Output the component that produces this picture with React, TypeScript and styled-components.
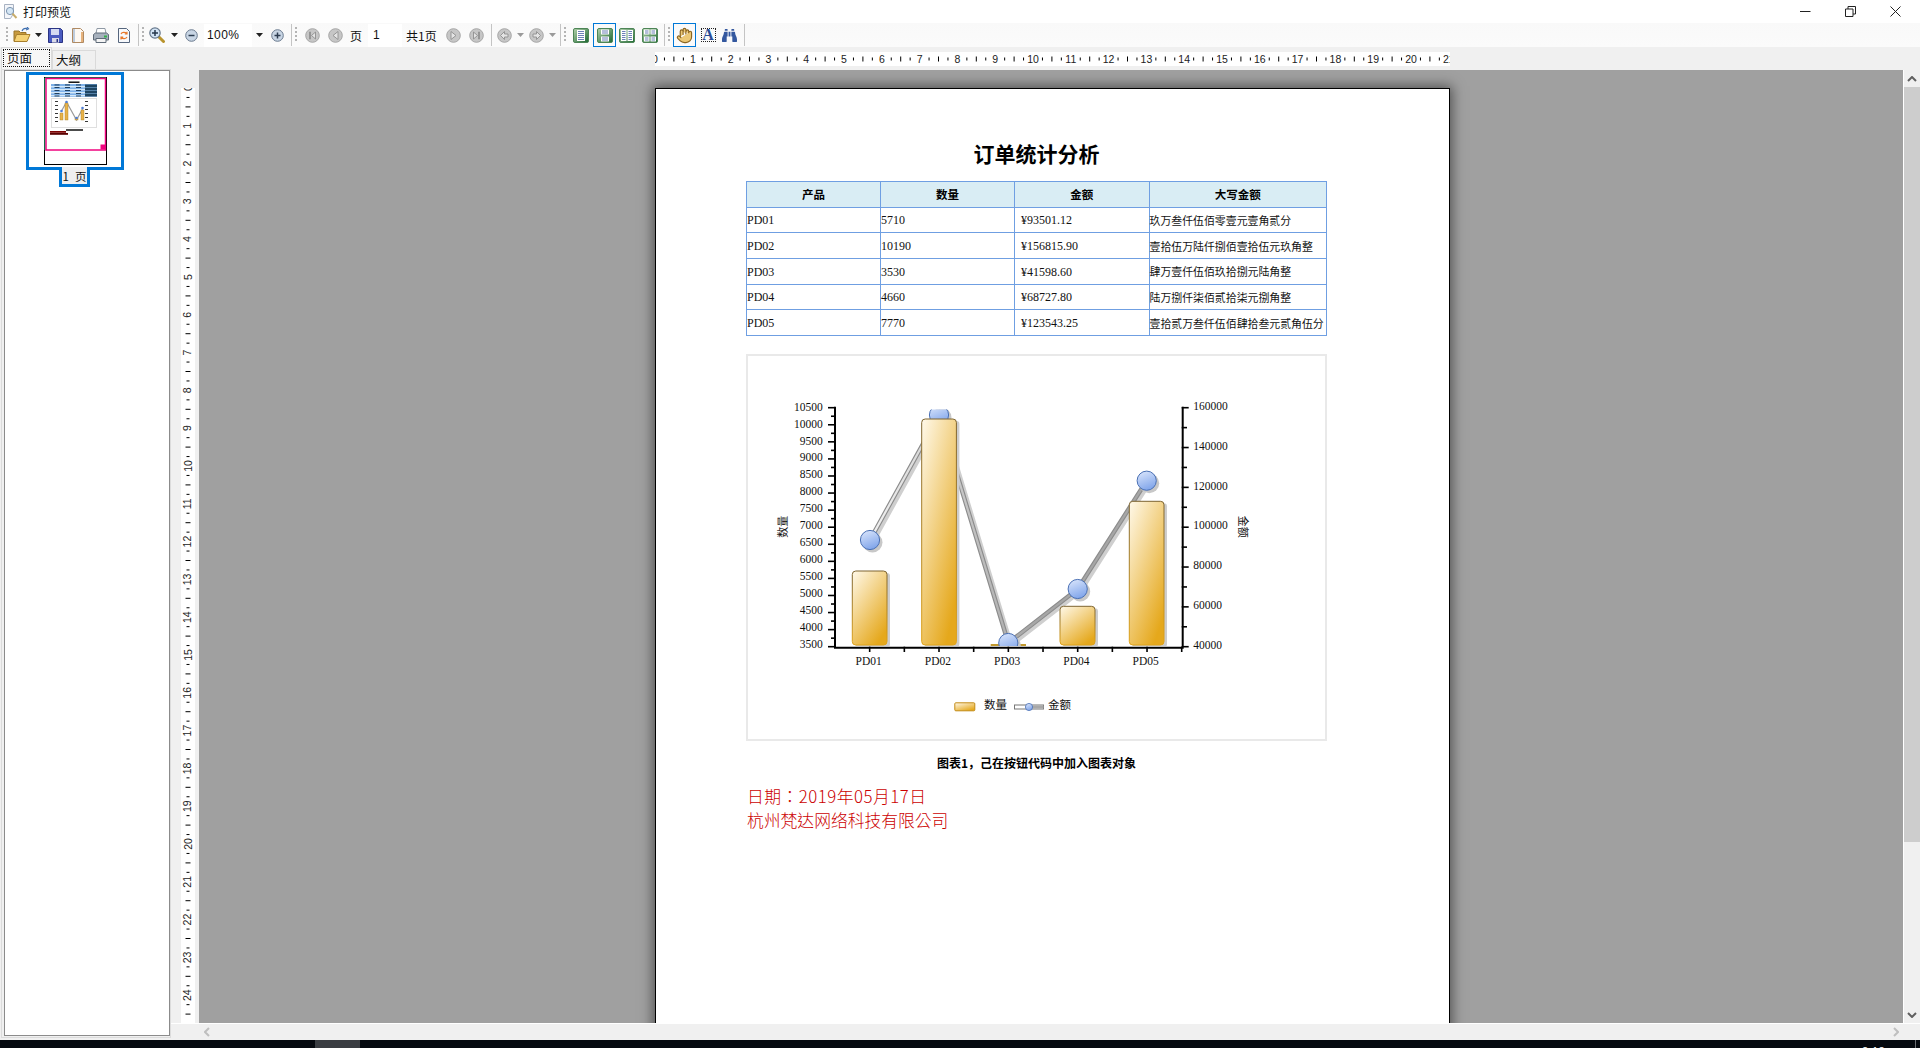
import React from 'react';
import styled, { createGlobalStyle } from 'styled-components';
import { FaBinoculars } from 'react-icons/fa';
import { Hand } from 'lucide-react';

const GlobalStyle = createGlobalStyle`
  html, body {
    margin: 0;
    padding: 0;
    background: #f0f0f0;
    overflow: hidden;
  }
  body {
    font-family: "Noto Sans CJK SC", "Liberation Sans", sans-serif;
    color: #111;
  }
`;

const Window = styled.div`
  width: 1920px;
  height: 1048px;
  display: flex;
  flex-direction: column;
  overflow: hidden;
`;

/* title bar */
const TitleBar = styled.div`
  height: 23px;
  flex: none;
  display: flex;
  align-items: center;
  background: #fff;
  padding-left: 3px;
  font-size: 12px;
`;

const TitleText = styled.span`
  margin-left: 5px;
  line-height: 23px;
`;

const WinButtons = styled.div`
  margin-left: auto;
  margin-right: 2px;
  display: flex;
`;

const WinButton = styled.div`
  width: 45px;
  height: 23px;
  display: flex;
  align-items: center;
  justify-content: center;
`;

/* toolbar */
const Toolbar = styled.div`
  height: 24px;
  flex: none;
  display: flex;
  align-items: center;
  padding-left: 4px;
  background: linear-gradient(#f9f9f9, #fbfbfb);
`;

const Slot = styled.div<{ $w: number; $selected?: boolean }>`
  width: ${p => p.$w}px;
  height: 24px;
  flex: none;
  box-sizing: border-box;
  display: flex;
  align-items: center;
  justify-content: center;
  border: ${p => (p.$selected ? '1px solid #0078d7' : 'none')};
`;

const Sep = styled.div<{ $w: number }>`
  width: ${p => p.$w}px;
  height: 22px;
  flex: none;
  box-sizing: border-box;
  border-right: 1px solid #c4c4c4;
`;

const Grip = styled.div<{ $w: number }>`
  width: ${p => p.$w}px;
  height: 16px;
  flex: none;
  display: flex;
  justify-content: center;
  &::before {
    content: '';
    width: 2px;
    height: 16px;
    background: repeating-linear-gradient(#b4b4b4 0 2px, transparent 2px 4px);
  }
`;

const ZoomCombo = styled.div`
  width: 48px;
  height: 23px;
  margin-left: 3px;
  flex: none;
  box-sizing: border-box;
  padding-left: 3px;
  background: #fff;
  font: 12px/23px "Liberation Sans", sans-serif;
  letter-spacing: 0.4px;
`;

const PageInput = styled.div`
  width: 34px;
  height: 23px;
  flex: none;
  box-sizing: border-box;
  padding-left: 5px;
  background: #fff;
  font: 12px/23px "Liberation Sans", sans-serif;
`;

const ToolLabel = styled.div<{ $w: number; $pad?: number }>`
  width: ${p => p.$w}px;
  flex: none;
  box-sizing: border-box;
  padding-left: ${p => p.$pad ?? 0}px;
  font-size: 12px;
  line-height: 23px;
  white-space: nowrap;
`;

const TextToolBox = styled.div`
  width: 15px;
  height: 14px;
  box-sizing: border-box;
  border: 1px dotted #222;
  display: flex;
  align-items: center;
  justify-content: center;
  font: bold 16px/12px "Liberation Serif", serif;
  color: #2b4c96;
`;

/* body */
const Body = styled.div`
  flex: 1;
  min-height: 0;
  display: flex;
`;

const LeftPane = styled.div`
  width: 171px;
  flex: none;
  display: flex;
  flex-direction: column;
  background: #f0f0f0;
`;

const TabRow = styled.div`
  height: 22px;
  flex: none;
  display: flex;
  align-items: flex-end;
  padding-left: 1px;
`;

const Tab = styled.div<{ $active?: boolean; $w: number }>`
  width: ${p => p.$w}px;
  height: ${p => (p.$active ? 22 : 19)}px;
  box-sizing: border-box;
  border: 1px solid #dadada;
  border-bottom: none;
  background: ${p => (p.$active ? '#f7f7f7' : '#f0f0f0')};
  padding: ${p => (p.$active ? '1px' : '0 0 0 3px')};
  font-size: 12.5px;
  line-height: 18px;
`;

const FocusBox = styled.div`
  height: 18px;
  box-sizing: border-box;
  border: 1px dotted #111;
  padding-left: 3px;
  line-height: 16px;
`;

const PanelOuter = styled.div`
  flex: 1;
  min-height: 0;
  width: 170px;
  margin: 0 0 2px 1px;
  box-sizing: border-box;
  border: 1px solid #dcdcdc;
  padding: 0 0 1px 2px;
  display: flex;
`;

const PanelInner = styled.div`
  flex: 1;
  min-width: 0;
  box-sizing: border-box;
  border: 1px solid #8b8b8b;
  background: #fff;
  display: flex;
  flex-direction: column;
  align-items: flex-start;
`;

const ThumbFrame = styled.div`
  width: 98px;
  height: 98px;
  margin: 1px 0 0 21px;
  box-sizing: border-box;
  border: 3px solid #0078d7;
  display: flex;
  justify-content: center;
  padding-top: 2px;
`;

const ThumbLabel = styled.div`
  position: relative;
  width: 31px;
  height: 20px;
  margin: -3px 0 0 54px;
  box-sizing: border-box;
  border: 3px solid #0078d7;
  border-top: none;
  background: #efefef;
  text-align: center;
  font-size: 11.5px;
  word-spacing: 0.4px;
  line-height: 19px;
  white-space: pre;
`;

const RightPane = styled.div`
  flex: 1;
  min-width: 0;
  display: flex;
  flex-direction: column;
`;

const RulerStrip = styled.div`
  height: 23px;
  flex: none;
  box-sizing: border-box;
  padding: 5px 0 0 484px;
  background: #f0f0f0;
`;

const HRuler = styled.svg`
  display: block;
  width: 795px;
  height: 14px;
  background: #fff;
`;

const Main = styled.div`
  flex: 1;
  min-height: 0;
  display: flex;
`;

const Gutter = styled.div`
  width: 28px;
  flex: none;
  box-sizing: border-box;
  padding: 18px 0 0 10px;
  background: #f0f0f0;
`;

const VRuler = styled.svg`
  display: block;
  width: 14px;
  height: 935px;
  background: #fff;
`;

const Canvas = styled.div`
  flex: 1;
  min-width: 0;
  background: #a0a0a0;
  overflow: hidden;
  padding: 18px 0 0 456px;
`;

const Page = styled.div`
  width: 795px;
  height: 1124px;
  box-sizing: border-box;
  border: 1px solid #000;
  background: #fff;
  box-shadow: 0 0 12px 2px rgba(0, 0, 0, 0.5);
  padding: 52px 0 0 90px;
`;

const Content = styled.div`
  width: 581px;
`;

const DocTitle = styled.h1`
  margin: 0 0 16px;
  font-size: 21px;
  line-height: 24px;
  font-weight: 700;
  text-align: center;
  color: #000;
`;

const Sheet = styled.table`
  width: 580px;
  border-collapse: collapse;
  table-layout: fixed;
`;

const HeadCell = styled.th`
  box-sizing: border-box;
  height: 25.67px;
  padding: 0;
  border: 1px solid #6f9fe2;
  background: #d9edf4;
  font-size: 11.5px;
  line-height: 14px;
  font-weight: 700;
  text-align: center;
  color: #000;
`;

const Cell = styled.td<{ $pad?: number }>`
  box-sizing: border-box;
  height: 25.67px;
  padding: 0 0 0 ${p => p.$pad ?? 0}px;
  border: 1px solid #6f9fe2;
  font-size: 10.9px;
  line-height: 14px;
  white-space: nowrap;
  color: #111;
`;

const Latin = styled.span`
  font: 12px/14px "Liberation Serif", serif;
`;

const ChartBox = styled.div`
  width: 581px;
  height: 387px;
  margin-top: 18px;
  box-sizing: border-box;
  border: 2px solid #e9e9e9;
`;

const ChartSvg = styled.svg`
  display: block;
  width: 577px;
  height: 383px;
`;

const AxisText = styled.text`
  font: 11.5px "Liberation Serif", serif;
  fill: #111;
`;

const CjkText = styled.text<{ $size: number }>`
  font: ${p => p.$size}px "Noto Sans CJK SC", sans-serif;
  fill: #111;
`;

const Caption = styled.div`
  margin-top: 15px;
  font-size: 12px;
  font-weight: 700;
  line-height: 14px;
  text-align: center;
  color: #000;
`;

const RedLines = styled.div`
  margin: 14px 0 0 1px;
  font-family: "Noto Sans CJK TC", "Noto Sans CJK SC", sans-serif;
  font-size: 16.8px;
  font-weight: 300;
  line-height: 24px;
  color: #cc0000;
  white-space: nowrap;
`;

const DateLine = styled.div`
  letter-spacing: 0.5px;
`;

const VScroll = styled.div`
  width: 17px;
  flex: none;
  box-sizing: border-box;
  border-left: 1px solid #fff;
  background: #f0f0f0;
  display: flex;
  flex-direction: column;
`;

const ScrollArrow = styled.div<{ $bottom?: boolean }>`
  height: 17px;
  flex: none;
  margin-top: ${p => (p.$bottom ? 'auto' : '0')};
  display: flex;
  align-items: center;
  justify-content: center;
`;

const ScrollThumb = styled.div`
  height: 755px;
  flex: none;
  background: #cdcdcd;
`;

const HScroll = styled.div`
  height: 17px;
  flex: none;
  box-sizing: border-box;
  border-top: 1px solid #fff;
  background: #f0f0f0;
  display: flex;
  align-items: center;
  justify-content: space-between;
  padding: 0 21px 0 33px;
`;

const Taskbar = styled.div`
  height: 8px;
  flex: none;
  position: relative;
  background: #05090f;
  display: flex;
  overflow: hidden;
`;

const TaskButton = styled.div`
  width: 45px;
  margin-left: 315px;
  background: #3a3d42;
`;

const Clock = styled.div`
  margin-left: auto;
  margin-right: 30px;
  padding-top: 5px;
  font: 12px/14px "Liberation Sans", sans-serif;
  color: #fff;
`;

const TrayLine = styled.div`
  width: 1px;
  margin-right: 4px;
  background: #6a6d72;
`;

/* toolbar drawings */
const Caret = ({ off }: { off?: boolean }) => (
  <svg width="7" height="4" viewBox="0 0 7 4"><path d="M0 0h7L3.5 4z" fill={off ? '#9a9a9a' : '#222'} /></svg>
);

const AppIcon = () => (
  <svg width="15" height="16" viewBox="0 0 15 16">
    <path d="M1.5.5h9v9l-3 5h-6z" fill="#f4f6fa" stroke="#a8b2c2" />
    <circle cx="7" cy="7" r="3.6" fill="#d4e6f5" stroke="#7c95b0" />
    <path d="M9.5 9.6l4 4.4" stroke="#c9ad6a" strokeWidth="2" />
  </svg>
);

const OpenIcon = () => (
  <svg width="18" height="16" viewBox="0 0 18 16">
    <path d="M1 4h5l1.5 1.5H13V14H1z" fill="#c79a3e" stroke="#9a7428" />
    <path d="M3.5 7.5H17L14 14.5H1z" fill="#f5d274" stroke="#a87f2c" />
    <path d="M9 4c1-2.5 3-3 5-2.5M14 0l1.5 1.8L13 3" fill="none" stroke="#3f6fb0" strokeWidth="1.2" />
  </svg>
);

const SaveIcon = () => (
  <svg width="15" height="15" viewBox="0 0 15 15">
    <path d="M.5.5h12l2 2v12H.5z" fill="#4a5bc0" stroke="#2b3484" />
    <path d="M3 1h8v6H3z" fill="#d4daf2" />
    <path d="M4 10h7v4.5H4z" fill="#dadbe8" />
    <path d="M8.5 11h1.5v3H8.5z" fill="#2b3484" />
  </svg>
);

const PageIcon = () => (
  <svg width="12" height="15" viewBox="0 0 12 15">
    <path d="M.5.5h8l3 3v11H.5z" fill="#fdf8f2" stroke="#b08a62" />
    <path d="M2 1v13" stroke="#7f9ec4" />
    <path d="M10 4v10" stroke="#e6b27c" strokeWidth="2" />
  </svg>
);

const PrinterIcon = () => (
  <svg width="16" height="15" viewBox="0 0 16 15">
    <path d="M4 .5h8l1 5H3z" fill="#fff" stroke="#8f99a5" />
    <path d="M.5 6.5l2-1.5h11l2 1.5V12h-15z" fill="#a7b1bd" stroke="#5f6b78" />
    <path d="M3 10.5h10v4H3z" fill="#f4f4f4" stroke="#5f6b78" />
    <path d="M11 7.5h3v2h-3z" fill="#33b04a" />
  </svg>
);

const ExportIcon = () => (
  <svg width="12" height="15" viewBox="0 0 12 15">
    <path d="M.5.5h8l3 3v11H.5z" fill="#f7f9fc" stroke="#56667e" />
    <path d="M3 6c1-2 4-2 6-.5M9 3.8v2.2H6.8M9 9c-1 2-4 2-6 .5M3 11.4V9.2h2.2" fill="none" stroke="#e8792c" strokeWidth="1.2" />
  </svg>
);

const ZoomInIcon = () => (
  <svg width="16" height="16" viewBox="0 0 16 16">
    <path d="M9.5 9.5l5 5" stroke="#b9942e" strokeWidth="3" strokeLinecap="round" />
    <circle cx="6" cy="6" r="5.2" fill="#d3e4f5" stroke="#66788c" strokeWidth="1.2" />
    <path d="M3 6h6M6 3v6" stroke="#26374c" strokeWidth="1.5" />
  </svg>
);

const RoundIcon = ({ plus }: { plus?: boolean }) => (
  <svg width="13" height="13" viewBox="0 0 13 13">
    <circle cx="6.5" cy="6.5" r="5.8" fill="#c8d5e4" stroke="#6a7a8f" />
    <path d={plus ? 'M3.5 6.5h6M6.5 3.5v6' : 'M3.5 6.5h6'} stroke="#2c3c50" strokeWidth="1.5" />
  </svg>
);

const NavIcon = ({ d }: { d: string }) => (
  <svg width="15" height="15" viewBox="0 0 15 15">
    <circle cx="7.5" cy="7.5" r="6.8" fill="#c6c6c6" stroke="#a6a6a6" />
    <path d={d} fill="#e4e4e4" stroke="#8e8e8e" strokeWidth="0.9" />
  </svg>
);

const NAV = {
  first: 'M4.5 4v7h1V4zM10.5 4v7L6.5 7.5z',
  prev: 'M10 3.5v8L5 7.5z',
  next: 'M5 3.5v8l5-4z',
  last: 'M9.5 4v7h1V4zM4.5 4v7l4-3.5z',
  back: 'M7.5 3.5v2.5H11v3H7.5v2.5L3.5 7.5z',
  fwd: 'M7.5 3.5v2.5H4v3h3.5v2.5l4-4z',
};

// pages are [x, y, w, h] inside the green frame
const LayoutIcon = ({ pages }: { pages: number[][] }) => (
  <svg width="16" height="15" viewBox="0 0 16 15">
    <defs>
      <linearGradient id="frameGreen" x1="0" y1="0" x2="1" y2="1">
        <stop offset="0" stopColor="#b4d2ae" />
        <stop offset="1" stopColor="#1c6630" />
      </linearGradient>
    </defs>
    <rect x="0.5" y="0.5" width="15" height="14" rx="1.5" fill="url(#frameGreen)" stroke="#4d8556" />
    {pages.map(([x, y, w, h], i) => (
      <g key={i}>
        <rect x={x} y={y} width={w} height={h} fill="#fff" />
        {Array.from({ length: Math.floor((h - 1) / 2) }, (_, k) => (
          <rect key={k} x={x + 1} y={y + 1 + k * 2} width={w - 2} height="1" fill="#6d80b8" />
        ))}
      </g>
    ))}
  </svg>
);

const Chevron = ({ dir, color }: { dir: 'up' | 'down' | 'left' | 'right'; color: string }) => {
  const d = { up: 'M1 5l4-4 4 4', down: 'M1 1l4 4 4-4', left: 'M5 1L1 5l4 4', right: 'M1 1l4 4-4 4' }[dir];
  const wide = dir === 'up' || dir === 'down';
  return (
    <svg width={wide ? 10 : 6} height={wide ? 6 : 10} viewBox={wide ? '0 0 10 6' : '0 0 6 10'}>
      <path d={d} fill="none" stroke={color} strokeWidth="2" />
    </svg>
  );
};

/* thumbnail of the page */
const Thumbnail = () => (
  <svg width="63" height="88" viewBox="0 0 63 88">
    <rect x="0.5" y="0.5" width="62" height="87" fill="#fff" stroke="#000" />
    <path d="M1 73V1h61" fill="none" stroke="#20dc90" />
    <rect x="2" y="1.5" width="59.5" height="71.5" fill="none" stroke="#f0047f" strokeWidth="1.5" />
    <rect x="56.5" y="67.5" width="5" height="5" fill="#f0047f" />
    <rect x="24.5" y="4.5" width="11" height="1.4" fill="#000" />
    <rect x="7" y="7" width="46" height="13" fill="#7db0e8" />
    {[9, 12, 15, 18].map(y => (
      <rect key={y} x="7" y={y} width="46" height="1.4" fill="#d5e8f7" />
    ))}
    {[7.5, 18, 29].map(x =>
      [7.5, 10, 13, 16, 18.5].map(y => <rect key={`${x}-${y}`} x={x + 3} y={y} width="5" height="0.9" fill="#14324f" />)
    )}
    <rect x="41" y="7.5" width="12" height="12" fill="#1f4563" />
    {[10, 13, 16].map(y => (
      <rect key={y} x="41" y={y} width="12" height="0.7" fill="#6d9cc8" />
    ))}
    <rect x="7.5" y="21.5" width="45" height="29" fill="#fff" stroke="#dfdfdf" />
    <polyline points="17.5,34 22.5,25 32.5,43 38.5,32" fill="none" stroke="#9a9a9a" strokeWidth="1.2" />
    {[[16, 36, 3, 7], [21, 26, 3, 17], [31, 41, 3, 2], [37, 33, 3, 10]].map(([x, y, w, h]) => (
      <rect key={x} x={x} y={y} width={w} height={h} fill="#e8b24a" stroke="#a67c20" strokeWidth="0.4" />
    ))}
    {[[17.5, 34], [22.5, 25], [32.5, 41], [38.5, 31]].map(([x, y]) => (
      <circle key={x} cx={x} cy={y} r="1.3" fill="#4f7fd8" />
    ))}
    {[24, 28, 32, 36, 40, 44].map(y => (
      <g key={y}>
        <rect x="11" y={y} width="3" height="0.9" fill="#222" />
        <rect x="41" y={y} width="3" height="0.9" fill="#222" />
      </g>
    ))}
    <rect x="22" y="52.3" width="17" height="1.4" fill="#000" />
    <rect x="6" y="54" width="16" height="1.8" fill="#7d0404" />
    <rect x="6" y="56" width="18" height="1.8" fill="#5a0202" />
  </svg>
);

/* chart data in screen coordinates, the svg viewBox starts at the chart box */
const X_TOP = 407.7;
const X_BOTTOM = 646.7;
const LEFT_AXIS = 835;
const RIGHT_AXIS = 1181.7;

const BARS = [
  { x: 852.3, top: 571, w: 34.7 },
  { x: 921.7, top: 419, w: 34.7 },
  { x: 1060, top: 606.3, w: 35 },
  { x: 1129.3, top: 501.3, w: 34.7 },
];

const POINTS = [
  [870, 540],
  [939, 415],
  [1008.3, 643],
  [1077.7, 589],
  [1146.7, 480.7],
];

const Marker = ({ x, y }: { x: number; y: number }) => (
  <g>
    <circle cx={x + 2.5} cy={y + 2.5} r="10" fill="#c8c8c8" />
    <circle cx={x} cy={y} r="9.6" fill="url(#markerFill)" stroke="#4a70b4" strokeWidth="1" />
  </g>
);

const Chart = () => {
  const line = POINTS.map(p => p.join(',')).join(' ');
  const shadow = POINTS.map(([x, y]) => `${x + 2.5},${y + 2}`).join(' ');
  return (
    <ChartSvg viewBox="748 356 577 383">
      <defs>
        <linearGradient id="barFill" x1="0" y1="0" x2="0.7" y2="1">
          <stop offset="0" stopColor="#fff9ea" />
          <stop offset="1" stopColor="#e5a81c" />
        </linearGradient>
        <linearGradient id="barStroke" x1="0" y1="0" x2="0" y2="1">
          <stop offset="0" stopColor="#7c6330" />
          <stop offset="1" stopColor="#e0a318" />
        </linearGradient>
        <linearGradient id="markerFill" x1="0.2" y1="0" x2="0.6" y2="1">
          <stop offset="0" stopColor="#d8e4fb" />
          <stop offset="1" stopColor="#7fa4ea" />
        </linearGradient>
        <linearGradient id="lineInner" gradientUnits="userSpaceOnUse" x1="870" y1="0" x2="1030" y2="0">
          <stop offset="0" stopColor="#f2f2f2" />
          <stop offset="1" stopColor="#a6a6a6" />
        </linearGradient>
        <clipPath id="plotArea">
          <rect x={LEFT_AXIS} y="409.5" width={RIGHT_AXIS - LEFT_AXIS} height="236.5" />
        </clipPath>
      </defs>

      <g clipPath="url(#plotArea)">
        <rect x="990.7" y="644" width="35.3" height="2.5" fill="#c39a2e" />
        <polyline points={shadow} fill="none" stroke="#cfcfcf" strokeWidth="5" />
        <polyline points={line} fill="none" stroke="#8c8c8c" strokeWidth="4.5" />
        <polyline points={line} fill="none" stroke="url(#lineInner)" strokeWidth="2.2" />
        {POINTS.map(([x, y]) => (
          <Marker key={x} x={x} y={y} />
        ))}
        {BARS.map(b => (
          <g key={b.x}>
            <rect x={b.x + 3} y={b.top + 2} width={b.w} height={645 - b.top} rx="3" fill="#cdcdcd" />
            <rect x={b.x} y={b.top} width={b.w} height={645 - b.top} rx="3.5" fill="url(#barFill)" stroke="url(#barStroke)" />
          </g>
        ))}
      </g>

      {/* axes */}
      <path d={`M${LEFT_AXIS} ${X_TOP - 1}V${X_BOTTOM + 1}H${RIGHT_AXIS + 1}V${X_TOP - 1}`} fill="none" stroke="#000" strokeWidth="2" />
      {Array.from({ length: 29 }, (_, i) => {
        const y = X_TOP + (i * (X_BOTTOM - X_TOP)) / 28;
        return <path key={i} d={`M${i % 2 ? 831 : 828} ${y}H${LEFT_AXIS}`} stroke="#000" strokeWidth="1.6" />;
      })}
      {Array.from({ length: 13 }, (_, i) => {
        const y = X_TOP + (i * (X_BOTTOM - X_TOP)) / 12;
        return <path key={i} d={`M${RIGHT_AXIS} ${y}H${i % 2 ? 1187 : 1188.7}`} stroke="#000" strokeWidth="1.6" />;
      })}
      {Array.from({ length: 10 }, (_, i) => {
        const x = LEFT_AXIS + 34.67 * (i + 1);
        return <path key={i} d={`M${x} ${X_BOTTOM}V652`} stroke="#000" strokeWidth="1.6" />;
      })}

      {/* labels */}
      {Array.from({ length: 15 }, (_, i) => (
        <AxisText key={i} x="822.7" y={i === 14 ? 648 : 410.6 + i * 16.95} textAnchor="end">
          {10500 - i * 500}
        </AxisText>
      ))}
      {[160000, 140000, 120000, 100000, 80000, 60000, 40000].map((v, i) => (
        <AxisText key={v} x="1193.3" y={410 + i * 39.8}>
          {v}
        </AxisText>
      ))}
      {['PD01', 'PD02', 'PD03', 'PD04', 'PD05'].map((t, i) => (
        <AxisText key={t} x={868.7 + i * 69.25} y="665" textAnchor="middle">
          {t}
        </AxisText>
      ))}
      <CjkText $size={11} x="782.7" y="530.5" textAnchor="middle" transform="rotate(-90 782.7 526.7)">数量</CjkText>
      <CjkText $size={11} x="1242.5" y="530.5" textAnchor="middle" transform="rotate(90 1242.5 526.7)">金额</CjkText>

      {/* legend */}
      <rect x="954.8" y="702.8" width="20" height="8" rx="1" fill="url(#barFill)" stroke="#c28b14" />
      <CjkText $size={11.5} x="984" y="708.5">数量</CjkText>
      <rect x="1014.5" y="705" width="29" height="4" fill="#fff" stroke="#777" />
      <rect x="1029" y="705.5" width="14.5" height="3" fill="#a8a8a8" />
      <circle cx="1029" cy="707" r="3.6" fill="url(#markerFill)" stroke="#4a70b4" strokeWidth="0.8" />
      <CjkText $size={11.5} x="1048" y="708.5">金额</CjkText>
    </ChartSvg>
  );
};

/* rulers */
const STEP = 37.8;

const HorizontalRuler = () => (
  <HRuler viewBox="0 0 795 14">
    {Array.from({ length: 85 }, (_, i) => {
      const x = (i * STEP) / 4;
      if (i % 4 === 0) {
        return (
          <text key={i} x={x} y="10.5" textAnchor="middle" fontSize="10.5" fontFamily="Liberation Sans, sans-serif" fill="#222">
            {i / 4}
          </text>
        );
      }
      return <rect key={i} x={x - 0.5} y={i % 2 ? 5.5 : 4.5} width="1" height={i % 2 ? 3 : 5} fill="#000" />;
    })}
  </HRuler>
);

const VerticalRuler = () => (
  <VRuler viewBox="0 0 14 935">
    {Array.from({ length: 100 }, (_, i) => {
      const y = (i * STEP) / 4;
      if (i % 4 === 0) {
        return (
          <text key={i} x="7" y={y + 3.5} transform={`rotate(-90 7 ${y})`} textAnchor="middle" fontSize="10.5" fontFamily="Liberation Sans, sans-serif" fill="#222">
            {i / 4}
          </text>
        );
      }
      return <rect key={i} x={i % 2 ? 5.5 : 4.5} y={y - 0.5} width={i % 2 ? 3 : 5} height="1" fill="#000" />;
    })}
  </VRuler>
);

const ROWS = [
  ['PD01', '5710', '¥93501.12', '玖万叁仟伍佰零壹元壹角贰分'],
  ['PD02', '10190', '¥156815.90', '壹拾伍万陆仟捌佰壹拾伍元玖角整'],
  ['PD03', '3530', '¥41598.60', '肆万壹仟伍佰玖拾捌元陆角整'],
  ['PD04', '4660', '¥68727.80', '陆万捌仟柒佰贰拾柒元捌角整'],
  ['PD05', '7770', '¥123543.25', '壹拾贰万叁仟伍佰肆拾叁元贰角伍分'],
];

const App = () => (
  <Window>
    <GlobalStyle />
    <TitleBar>
      <AppIcon />
      <TitleText>打印预览</TitleText>
      <WinButtons>
        <WinButton>
          <svg width="11" height="11" viewBox="0 0 11 11"><path d="M0 5.5h10.5" stroke="#222" /></svg>
        </WinButton>
        <WinButton>
          <svg width="11" height="11" viewBox="0 0 11 11"><path d="M.5 3h7.5v7.5H.5zM3 3V.5h7.5V8H8" fill="none" stroke="#222" /></svg>
        </WinButton>
        <WinButton>
          <svg width="11" height="11" viewBox="0 0 11 11"><path d="M.5.5l10 10M10.5.5l-10 10" stroke="#222" /></svg>
        </WinButton>
      </WinButtons>
    </TitleBar>

    <Toolbar>
      <Grip $w={6} />
      <Slot $w={24}><OpenIcon /></Slot>
      <Slot $w={8}><Caret /></Slot>
      <Slot $w={26}><SaveIcon /></Slot>
      <Slot $w={19}><PageIcon /></Slot>
      <Slot $w={27}><PrinterIcon /></Slot>
      <Slot $w={19}><ExportIcon /></Slot>
      <Sep $w={6} />
      <Grip $w={8} />
      <Slot $w={20}><ZoomInIcon /></Slot>
      <Slot $w={14}><Caret /></Slot>
      <Slot $w={20}><RoundIcon /></Slot>
      <ZoomCombo>100%</ZoomCombo>
      <Slot $w={14}><Caret /></Slot>
      <Slot $w={22}><RoundIcon plus /></Slot>
      <Sep $w={4} />
      <Grip $w={7} />
      <Slot $w={26}><NavIcon d={NAV.first} /></Slot>
      <Slot $w={20}><NavIcon d={NAV.prev} /></Slot>
      <ToolLabel $w={23} $pad={5}>页</ToolLabel>
      <PageInput>1</PageInput>
      <ToolLabel $w={39} $pad={4}>共1页</ToolLabel>
      <Slot $w={24}><NavIcon d={NAV.next} /></Slot>
      <Slot $w={22}><NavIcon d={NAV.last} /></Slot>
      <Sep $w={5} />
      <Slot $w={24}><NavIcon d={NAV.back} /></Slot>
      <Slot $w={8}><Caret off /></Slot>
      <Slot $w={24}><NavIcon d={NAV.fwd} /></Slot>
      <Slot $w={8}><Caret off /></Slot>
      <Sep $w={5} />
      <Grip $w={8} />
      <Slot $w={24}><LayoutIcon pages={[[4, 2, 8, 11]]} /></Slot>
      <Slot $w={23} $selected><LayoutIcon pages={[[4, 1.5, 8, 5], [4, 8.5, 8, 5]]} /></Slot>
      <Slot $w={22}><LayoutIcon pages={[[2, 2, 5.5, 11], [8.5, 2, 5.5, 11]]} /></Slot>
      <Slot $w={24}><LayoutIcon pages={[[2, 1.5, 5.5, 5], [8.5, 1.5, 5.5, 5], [2, 8.5, 5.5, 5], [8.5, 8.5, 5.5, 5]]} /></Slot>
      <Sep $w={3} />
      <Grip $w={8} />
      <Slot $w={23} $selected><Hand size={17} fill="#ecc876" stroke="#8a6420" strokeWidth={1.6} /></Slot>
      <Slot $w={24}><TextToolBox>A</TextToolBox></Slot>
      <Slot $w={19}><FaBinoculars size={15} color="#34589f" /></Slot>
      <Sep $w={6} />
    </Toolbar>

    <Body>
      <LeftPane>
        <TabRow>
          <Tab $active $w={51}><FocusBox>页面</FocusBox></Tab>
          <Tab $w={44}>大纲</Tab>
        </TabRow>
        <PanelOuter>
          <PanelInner>
            <ThumbFrame><Thumbnail /></ThumbFrame>
            <ThumbLabel>1  页</ThumbLabel>
          </PanelInner>
        </PanelOuter>
      </LeftPane>

      <RightPane>
        <RulerStrip><HorizontalRuler /></RulerStrip>
        <Main>
          <Gutter><VerticalRuler /></Gutter>
          <Canvas>
            <Page>
              <Content>
                <DocTitle>订单统计分析</DocTitle>
                <Sheet>
                  <colgroup>
                    <col style={{ width: 134 }} />
                    <col style={{ width: 134 }} />
                    <col style={{ width: 134.5 }} />
                    <col style={{ width: 177.5 }} />
                  </colgroup>
                  <thead>
                    <tr>
                      <HeadCell>产品</HeadCell>
                      <HeadCell>数量</HeadCell>
                      <HeadCell>金额</HeadCell>
                      <HeadCell>大写金额</HeadCell>
                    </tr>
                  </thead>
                  <tbody>
                    {ROWS.map(r => (
                      <tr key={r[0]}>
                        <Cell><Latin>{r[0]}</Latin></Cell>
                        <Cell><Latin>{r[1]}</Latin></Cell>
                        <Cell $pad={6}><Latin>{r[2]}</Latin></Cell>
                        <Cell>{r[3]}</Cell>
                      </tr>
                    ))}
                  </tbody>
                </Sheet>
                <ChartBox><Chart /></ChartBox>
                <Caption>图表1，己在按钮代码中加入图表对象</Caption>
                <RedLines>
                  <DateLine>日期：2019年05月17日</DateLine>
                  杭州梵达网络科技有限公司
                </RedLines>
              </Content>
            </Page>
          </Canvas>
          <VScroll>
            <ScrollArrow><Chevron dir="up" color="#606060" /></ScrollArrow>
            <ScrollThumb />
            <ScrollArrow $bottom><Chevron dir="down" color="#606060" /></ScrollArrow>
          </VScroll>
        </Main>
        <HScroll>
          <Chevron dir="left" color="#bfbfbf" />
          <Chevron dir="right" color="#bfbfbf" />
        </HScroll>
      </RightPane>
    </Body>

    <Taskbar>
      <TaskButton />
      <Clock>8:18</Clock>
      <TrayLine />
    </Taskbar>
  </Window>
);

export default App;
